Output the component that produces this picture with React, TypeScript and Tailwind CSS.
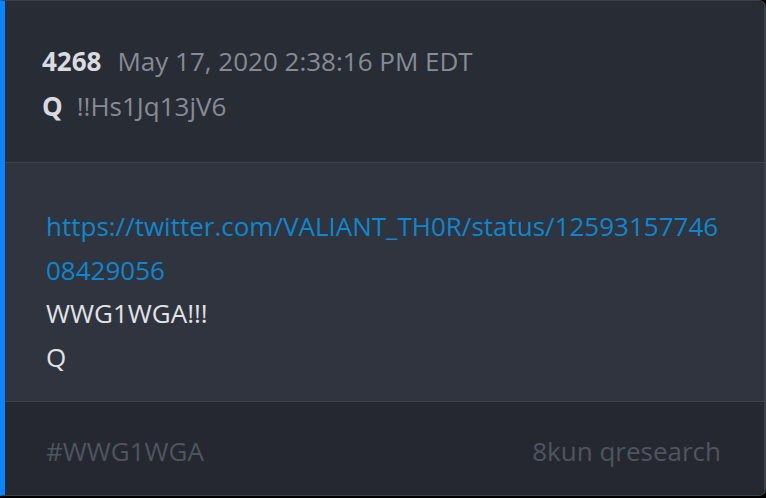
import React from "react";

const post = {
  num: 4268,
  time: "May 17, 2020 2:38:16 PM EDT",
  author: "Q",
  trip: "!!Hs1Jq13jV6",
  link: "https://twitter.com/VALIANT_TH0R/status/1259315774608429056",
  lines: ["WWG1WGA!!!", "Q"],
  tag: "#WWG1WGA",
  source: "8kun qresearch",
};

export default function App() {
  return (
    <div
      className="w-[766px] h-[498px] bg-black"
      style={{ fontFamily: '"Open Sans", "Noto Sans", sans-serif' }}
    >
      <div className="h-[496px] flex flex-col overflow-hidden rounded-r-[7px] border-l-[5px] border-l-[#0a84ff] border-y border-r-2 border-y-[#3b404a] border-r-[#3b404a]">
        <div className="h-[161px] bg-[#282c35] pl-[37px] pt-[38px] text-[26px] leading-[45px]">
          <div className="flex items-baseline">
            <span className="font-bold text-[#d9dbe0]">{post.num}</span>
            <span className="ml-[16px] text-[#868b96]">{post.time}</span>
          </div>
          <div className="flex items-baseline">
            <span className="font-bold text-[#d9dbe0]">{post.author}</span>
            <span className="ml-[14px] text-[#868b96]">{post.trip}</span>
          </div>
        </div>
        <div className="h-px bg-[#3d424c]" />
        <div className="h-[238px] bg-[#2f343e] pl-[41px] pr-[44px] pt-[42px] text-[26px] leading-[43.7px] text-[#e1e3e7]">
          <a className="block break-all text-[#0d87cf]">{post.link}</a>
          {post.lines.map((l) => (
            <div key={l}>{l}</div>
          ))}
        </div>
        <div className="h-px bg-[#3d424c]" />
        <div className="flex-1 bg-[#252830] pl-[41px] pr-[43px] pt-[6px] flex items-center justify-between text-[26px] text-[#4f5461]">
          <span>{post.tag}</span>
          <span>{post.source}</span>
        </div>
      </div>
    </div>
  );
}
